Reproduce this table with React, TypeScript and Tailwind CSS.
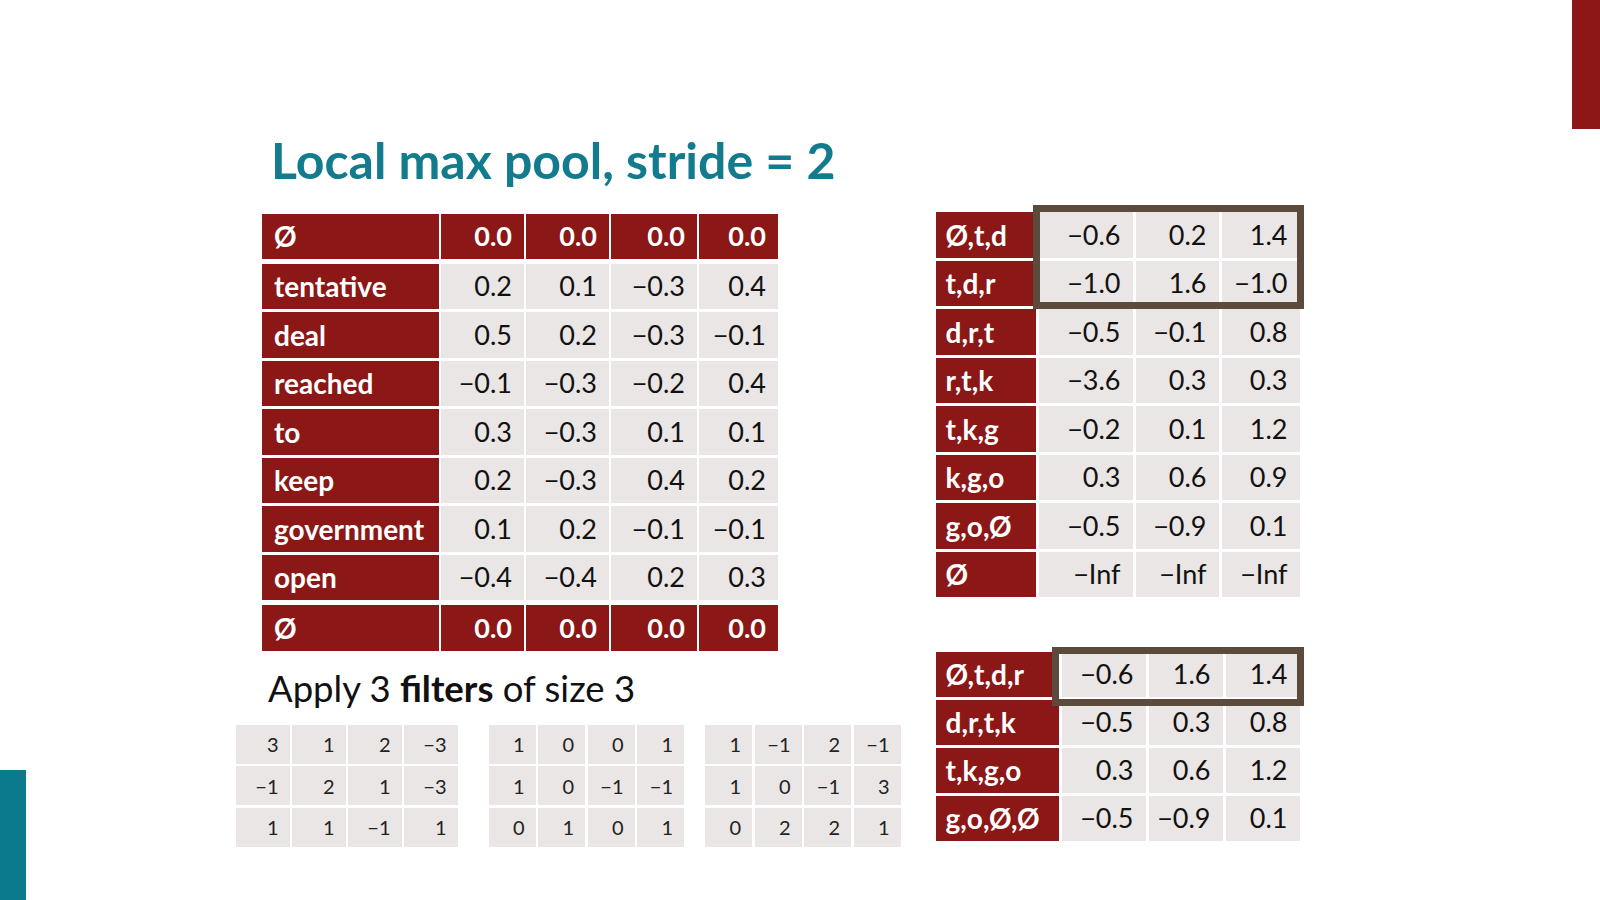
import React from "react";

type Row = { label: string; values: string[]; head?: boolean };

const RED = "bg-[#8b1717]";

const poolInput: Row[] = [
  { label: "Ø", values: ["0.0", "0.0", "0.0", "0.0"], head: true },
  { label: "tentative", values: ["0.2", "0.1", "−0.3", "0.4"] },
  { label: "deal", values: ["0.5", "0.2", "−0.3", "−0.1"] },
  { label: "reached", values: ["−0.1", "−0.3", "−0.2", "0.4"] },
  { label: "to", values: ["0.3", "−0.3", "0.1", "0.1"] },
  { label: "keep", values: ["0.2", "−0.3", "0.4", "0.2"] },
  { label: "government", values: ["0.1", "0.2", "−0.1", "−0.1"] },
  { label: "open", values: ["−0.4", "−0.4", "0.2", "0.3"] },
  { label: "Ø", values: ["0.0", "0.0", "0.0", "0.0"], head: true },
];

const convOut: Row[] = [
  { label: "Ø,t,d", values: ["−0.6", "0.2", "1.4"] },
  { label: "t,d,r", values: ["−1.0", "1.6", "−1.0"] },
  { label: "d,r,t", values: ["−0.5", "−0.1", "0.8"] },
  { label: "r,t,k", values: ["−3.6", "0.3", "0.3"] },
  { label: "t,k,g", values: ["−0.2", "0.1", "1.2"] },
  { label: "k,g,o", values: ["0.3", "0.6", "0.9"] },
  { label: "g,o,Ø", values: ["−0.5", "−0.9", "0.1"] },
  { label: "Ø", values: ["−Inf", "−Inf", "−Inf"] },
];

const pooled: Row[] = [
  { label: "Ø,t,d,r", values: ["−0.6", "1.6", "1.4"] },
  { label: "d,r,t,k", values: ["−0.5", "0.3", "0.8"] },
  { label: "t,k,g,o", values: ["0.3", "0.6", "1.2"] },
  { label: "g,o,Ø,Ø", values: ["−0.5", "−0.9", "0.1"] },
];

const filters: string[][][] = [
  [
    ["3", "1", "2", "−3"],
    ["−1", "2", "1", "−3"],
    ["1", "1", "−1", "1"],
  ],
  [
    ["1", "0", "0", "1"],
    ["1", "0", "−1", "−1"],
    ["0", "1", "0", "1"],
  ],
  [
    ["1", "−1", "2", "−1"],
    ["1", "0", "−1", "3"],
    ["0", "2", "2", "1"],
  ],
];

function DataTable({
  rows,
  widths,
  gap,
  rowGaps,
  pad,
}: {
  rows: Row[];
  widths: number[];
  gap: string;
  rowGaps: string[];
  pad: string;
}) {
  return (
    <div className="flex flex-col">
      {rows.map((row, i) => (
        <div key={i} className={`flex ${gap} ${rowGaps[i]}`}>
          <div
            className={`${RED} h-[45.5px] flex items-center ${pad} text-white font-bold text-[28px]`}
            style={{ width: widths[0] }}
          >
            {row.label}
          </div>
          {row.values.map((v, j) => (
            <div
              key={j}
              className={`h-[45.5px] flex items-center justify-end pr-[12px] text-[27px] ${
                row.head ? `${RED} text-white font-bold` : "bg-[#ebe6e6] text-[#111]"
              }`}
              style={{ width: widths[j + 1] }}
            >
              {v}
            </div>
          ))}
        </div>
      ))}
    </div>
  );
}

function Filter({ data, colW }: { data: string[][]; colW: string }) {
  return (
    <div className="flex flex-col gap-[2.5px]">
      {data.map((r, i) => (
        <div key={i} className="flex gap-[2.5px]">
          {r.map((v, j) => (
            <div
              key={j}
              className={`${colW} h-[39px] bg-[#ebe6e6] flex items-center justify-end pr-[11px] text-[20px] text-[#222]`}
            >
              {v}
            </div>
          ))}
        </div>
      ))}
    </div>
  );
}

export default function App() {
  return (
    <div className="flex w-[1600px] h-[900px] bg-white overflow-hidden font-['Lato',sans-serif]">
      <div className="w-[26px] flex flex-col justify-end">
        <div className="h-[130px] bg-[#0b7a8d]" />
      </div>

      <main className="flex-1 flex flex-col">
        <h1 className="mt-[135px] ml-[245px] text-[50px] leading-[50px] font-bold text-[#127b8e]">
          Local max pool, stride = 2
        </h1>

        <div className="mt-[19px] flex items-start">
          <div className="ml-[210px] flex flex-col">
            <div className="ml-[26px] mt-[9.5px]">
              <DataTable
                rows={poolInput}
                widths={[177, 83, 83, 86, 79]}
                gap="gap-[2px]"
                rowGaps={[
                  "",
                  "mt-[4.5px]",
                  "mt-[3px]",
                  "mt-[3px]",
                  "mt-[3px]",
                  "mt-[3px]",
                  "mt-[3px]",
                  "mt-[3px]",
                  "mt-[5px]",
                ]}
                pad="pl-[12px]"
              />
            </div>
            <p className="ml-[32px] mt-[17px] text-[36.5px] leading-[40px] text-[#111]">
              Apply 3 <span className="font-bold">filters</span> of size 3
            </p>
            <div className="mt-[17px] flex items-start">
              <Filter data={filters[0]} colW="w-[53.5px]" />
              <div className="ml-[31px]">
                <Filter data={filters[1]} colW="w-[47px]" />
              </div>
              <div className="ml-[21px]">
                <Filter data={filters[2]} colW="w-[47px]" />
              </div>
            </div>
          </div>

          <div className="ml-[35px] flex flex-col">
            <div className="relative mt-[8px]">
              <DataTable
                rows={convOut}
                widths={[100, 94, 83, 78]}
                gap="gap-[3px]"
                rowGaps={["", "mt-[3px]", "mt-[3px]", "mt-[3px]", "mt-[3px]", "mt-[3px]", "mt-[3px]", "mt-[3px]"]}
                pad="pl-[10px]"
              />
              <div className="absolute left-[97.5px] top-[-7px] w-[271px] h-[104px] border-[7px] border-[#5c4a3d]" />
            </div>

            <div className="relative mt-[54.5px]">
              <DataTable
                rows={pooled}
                widths={[123, 84, 74, 74]}
                gap="gap-[3px]"
                rowGaps={["", "mt-[2.5px]", "mt-[2.5px]", "mt-[2.5px]"]}
                pad="pl-[10px]"
              />
              <div className="absolute left-[116.5px] top-[-4.5px] w-[252px] h-[58.5px] border-[7px] border-[#5c4a3d]" />
            </div>
          </div>
        </div>
      </main>

      <div className="w-[28px]">
        <div className="h-[129px] bg-[#8b1717]" />
      </div>
    </div>
  );
}
